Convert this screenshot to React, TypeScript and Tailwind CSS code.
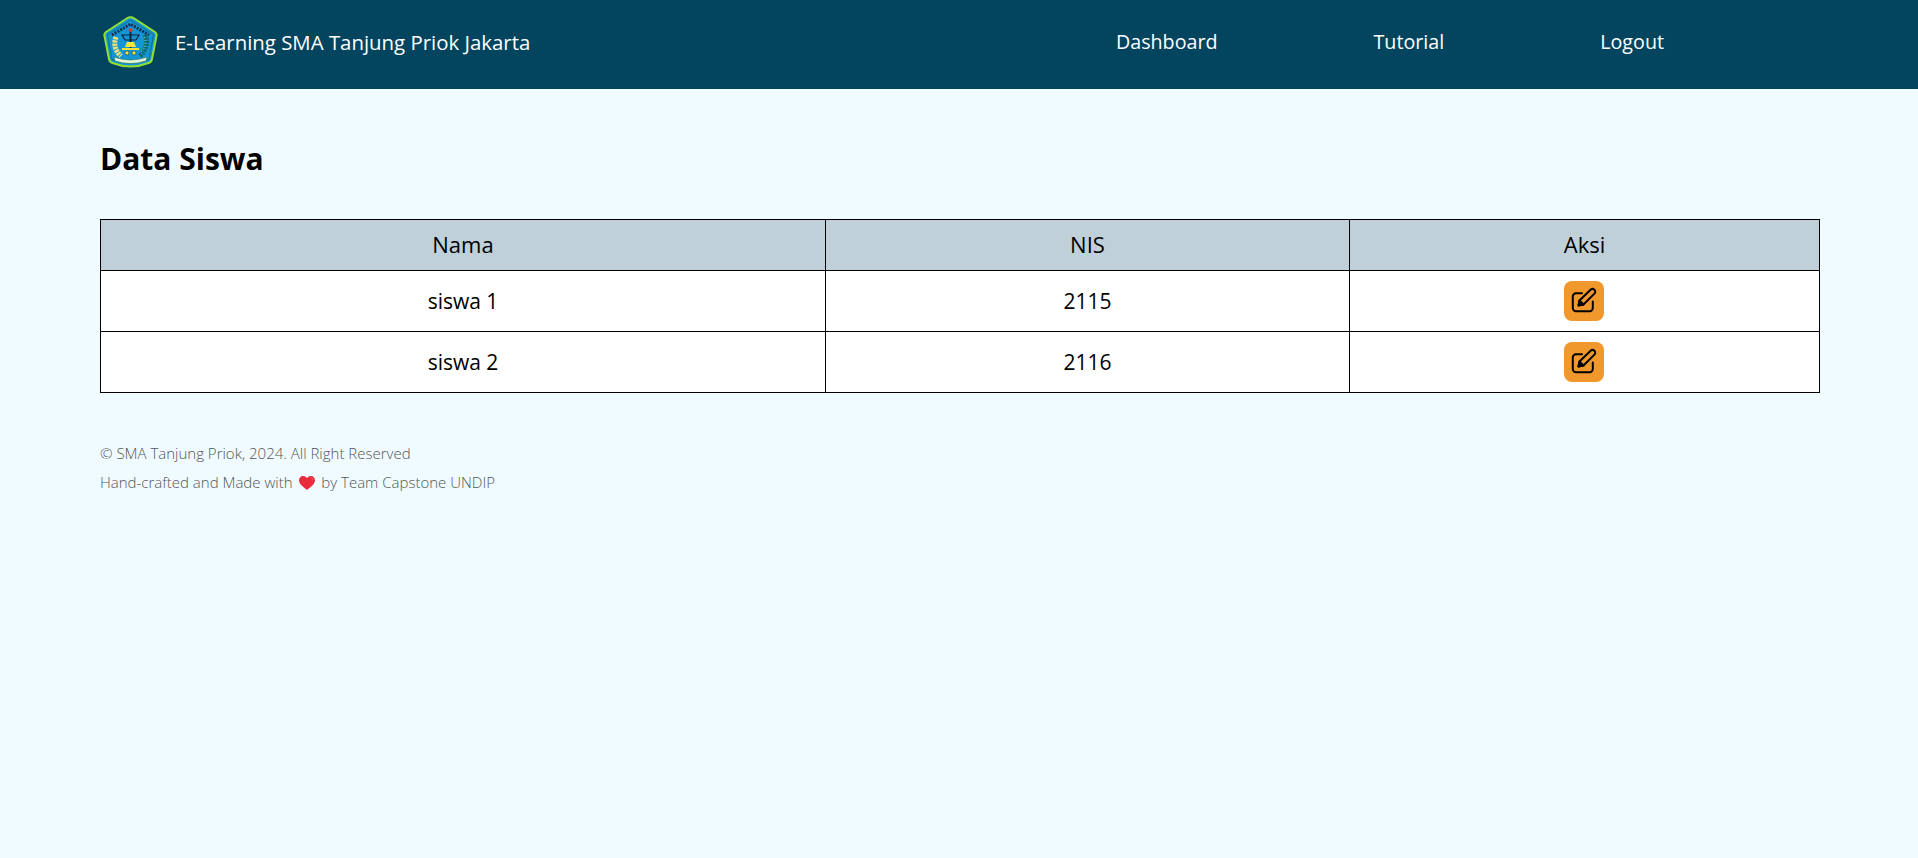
import React from 'react';

const students = [
  { name: 'siswa 1', nis: '2115' },
  { name: 'siswa 2', nis: '2116' },
];

const Logo = () => (
  <svg width="55" height="53" viewBox="0 0 55 53">
    <path d="M27.500 1.200 Q29 1 30.500 2 L52 16 Q54 17.500 53.600 19.500 L49 43 Q48.500 46 45.500 47 Q27.500 54 9.500 47 Q6.500 46 6 43 L1.400 19.500 Q1 17.500 3 16 L24.500 2 Q26 1 27.500 1.200 Z" fill="#1496d6" stroke="#93e02c" strokeWidth="2" />
    <path d="M27.500 4 L50.500 18.500 L46 43.500 Q27.500 51 9 43.500 L4.500 18.500 Z" fill="#1496d6" stroke="#0d5c66" strokeWidth="0.700" />
    <path d="M9 19 L27.500 8 L46 19" fill="none" stroke="#0f2f4a" strokeWidth="3" strokeDasharray="2 1.200" />
    <path d="M13 21 Q9 32 18 40" fill="none" stroke="#e9e27a" strokeWidth="5" strokeDasharray="2.500 0.800" />
    <path d="M42 19 Q47 30 37 40" fill="none" stroke="#0c6a60" strokeWidth="5" strokeDasharray="2 1" />
    <path d="M41 21 Q45 30 37 37" fill="none" stroke="#a5e0d0" strokeWidth="1" strokeDasharray="1 2" />
    <rect x="26.500" y="15" width="2" height="17" fill="#10223a" />
    <circle cx="27.500" cy="14" r="2" fill="#e5352b" />
    <path d="M19 19 H36 L33 24 H22 Z" fill="none" stroke="#10223a" strokeWidth="1.200" />
    <path d="M24 26 H31 L33 31 H22 Z" fill="#f4e53c" />
    <rect x="19" y="32" width="17" height="2" fill="#f4e53c" />
    <circle cx="24" cy="37" r="2" fill="#f4e53c" stroke="#10223a" strokeWidth="0.500" />
    <circle cx="31" cy="37" r="2" fill="#f4e53c" stroke="#10223a" strokeWidth="0.500" />
    <path d="M11 41 Q27.500 47 44 41 L43 45 Q27.500 50 12 45 Z" fill="#e6f5d8" stroke="#14704a" strokeWidth="0.600" />
  </svg>
);

const Heart = () => (
  <svg width="16" height="14" viewBox="0 0 16 14" className="ml-[3px] mr-[2px] inline-block align-[-2px]">
    <path d="M8 14 C3 10 0 7.500 0 4.200 C0 1.800 1.800 0 4 0 C5.600 0 7.100 .8 8 2.200 C8.900 .8 10.400 0 12 0 C14.200 0 16 1.800 16 4.200 C16 7.500 13 10 8 14 Z" fill="#e82c3c" />
    <path d="M11 1.500 C13 1 14.800 2.500 14.500 4.800 C13.800 3 12.500 2 11 1.500 Z" fill="#f77a85" />
  </svg>
);

const EditIcon = () => (
  <svg width="28" height="28" viewBox="0 0 28 28" fill="none" stroke="currentColor" strokeWidth="2" strokeLinecap="round" strokeLinejoin="round">
    <path d="M12 6.300H6a3.200 3.200 0 0 0-3.200 3.200V21a3.200 3.200 0 0 0 3.200 3.200h13.600a3.200 3.200 0 0 0 3.200-3.200v-6.500" />
    <path d="M8.500 18.500l1-5L20.600 2.800a2.600 2.600 0 0 1 3.800 3.800L13.500 17.500Z" />
    <path d="M8.500 18.500l1-5 4 4Z" fill="currentColor" />
  </svg>
);

export default function App() {
  return (
    <div className="flex min-h-[858px] flex-col bg-[#f0fbff] font-['Open_Sans',sans-serif] text-black">
      <nav className="flex h-[89px] items-center bg-[#03455f] pb-[4px] pl-[103px] text-white">
        <Logo />
        <span className="ml-[17px] pb-[1px] text-[20.4px] font-medium">E-Learning SMA Tanjung Priok Jakarta</span>
        <div className="ml-auto mr-[254px] flex gap-[156px] pb-[1px] text-[19.7px] font-medium">
          <a>Dashboard</a>
          <a>Tutorial</a>
          <a>Logout</a>
        </div>
      </nav>

      <main className="px-[100px] pt-[49px]">
        <h1 className="text-[30px] leading-[41px] font-bold">Data Siswa</h1>

        <table className="mt-[40px] w-[1720px] table-fixed border-collapse border border-black text-center text-[21px]">
          <thead>
            <tr className="h-[51px] bg-[#c0d0d9] text-[22px]">
              <th className="w-[725px] border border-black pb-[2px] font-medium">Nama</th>
              <th className="w-[524px] border border-black pb-[2px] font-medium">NIS</th>
              <th className="border border-black pb-[2px] font-medium">Aksi</th>
            </tr>
          </thead>
          <tbody className="bg-white">
            {students.map((s) => (
              <tr key={s.nis} className="h-[61px]">
                <td className="border border-black pt-[1px]">{s.name}</td>
                <td className="border border-black pt-[1px]">{s.nis}</td>
                <td className="border border-black pr-[2px]">
                  <button className="mx-auto flex size-10 items-center justify-center rounded-lg bg-[#f0982c] text-black">
                    <EditIcon />
                  </button>
                </td>
              </tr>
            ))}
          </tbody>
        </table>

        <footer className="mt-[46px] text-[15px] font-light leading-[29px] text-[#555]">
          <p>© SMA Tanjung Priok, 2024. All Right Reserved</p>
          <p>
            Hand-crafted and Made with <Heart /> by Team Capstone UNDIP
          </p>
        </footer>
      </main>
    </div>
  );
}
